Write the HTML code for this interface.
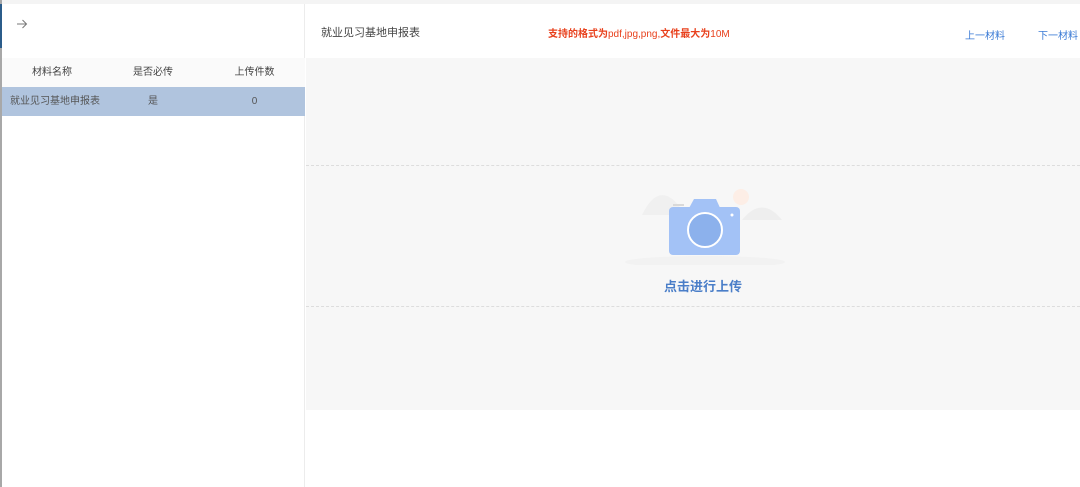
<!DOCTYPE html>
<html><head><meta charset="utf-8"><style>
*{margin:0;padding:0;box-sizing:border-box}
body{width:1080px;height:487px;overflow:hidden;background:#fff;font-family:"Liberation Sans","Noto Sans CJK SC",sans-serif;position:relative}
.abs{position:absolute}
.topline{left:0;top:0;width:1080px;height:4px;background:#f4f4f4}
.left{left:0;top:4px;width:305px;height:483px;border-right:1px solid #ececec}
.edge{left:0;top:0;width:2px;height:487px;background:#a8a8a8}
.edge2{left:0;top:4px;width:2px;height:44px;background:#2b5c8a}
.th{left:2px;top:58px;width:303px;height:29px;background:#fafafa;font-size:10px;color:#444}
.tr{left:2px;top:87px;width:303px;height:29px;background:#b0c4de;font-size:10px;color:#555}
.c{position:absolute;top:0;line-height:29px;text-align:center}
.hdr{left:306px;top:4px;width:774px;height:54px;background:#fff}
.gray{left:306px;top:58px;width:774px;height:352px;background:#f7f7f7}
.dash{left:306px;top:165px;width:774px;height:142px;border-top:1px dashed #ddd;border-bottom:1px dashed #ddd}
</style></head><body>
<div class="abs topline"></div>
<div class="abs left"></div>
<div class="abs edge"></div><div class="abs edge2"></div>
<svg class="abs" style="left:16px;top:18px" width="12" height="12" viewBox="0 0 12 12"><path d="M1 6H10.5M6.5 2L10.5 6L6.5 10" stroke="#777" stroke-width="1" fill="none"/></svg>
<div class="abs th"><span class="c" style="left:0;width:100px">材料名称</span><span class="c" style="left:100px;width:102px">是否必传</span><span class="c" style="left:202px;width:101px">上传件数</span></div>
<div class="abs tr"><span class="c" style="left:8px;width:auto">就业见习基地申报表</span><span class="c" style="left:100px;width:102px">是</span><span class="c" style="left:202px;width:101px">0</span></div>
<div class="abs hdr">
<span class="abs" style="left:15px;top:20px;font-size:11px;color:#444">就业见习基地申报表</span>
<span class="abs" style="left:242px;top:21px;font-size:10px;color:#e8401c;white-space:nowrap"><b>支持的格式为</b>pdf,jpg,png,<b>文件最大为</b>10M</span>
<span class="abs" style="left:659px;top:23px;font-size:10px;color:#3a7ad5">上一材料</span>
<span class="abs" style="left:732px;top:23px;font-size:10px;color:#3a7ad5;white-space:nowrap">下一材料</span>
</div>
<div class="abs gray"></div>
<div class="abs dash"></div>
<svg class="abs" style="left:620px;top:180px" width="170" height="85" viewBox="0 0 170 85">
<ellipse cx="85" cy="82" rx="80" ry="6" fill="#f2f2f2"/>
<path d="M22 35 Q40 -2 62 30 L62 35Z" fill="#f0f0f0"/>
<path d="M122 40 Q142 15 162 40Z" fill="#eeeeee"/>
<circle cx="121" cy="17" r="8" fill="#fdeee6"/>
<rect x="49" y="27" width="71" height="48" rx="4" fill="#a3c2f6"/>
<path d="M68 30 L74 19 L96 19 L101 30Z" fill="#a3c2f6"/>
<rect x="53" y="24" width="11" height="2" fill="#d9d9d9"/>
<circle cx="85" cy="50" r="17" fill="#8cb1ec" stroke="#fff" stroke-width="2"/>
<circle cx="112" cy="35" r="1.5" fill="#fff"/>
</svg>
<div class="abs" style="left:664px;top:276px;font-size:13px;font-weight:bold;color:#4a7ec8">点击进行上传</div>
</body></html>
